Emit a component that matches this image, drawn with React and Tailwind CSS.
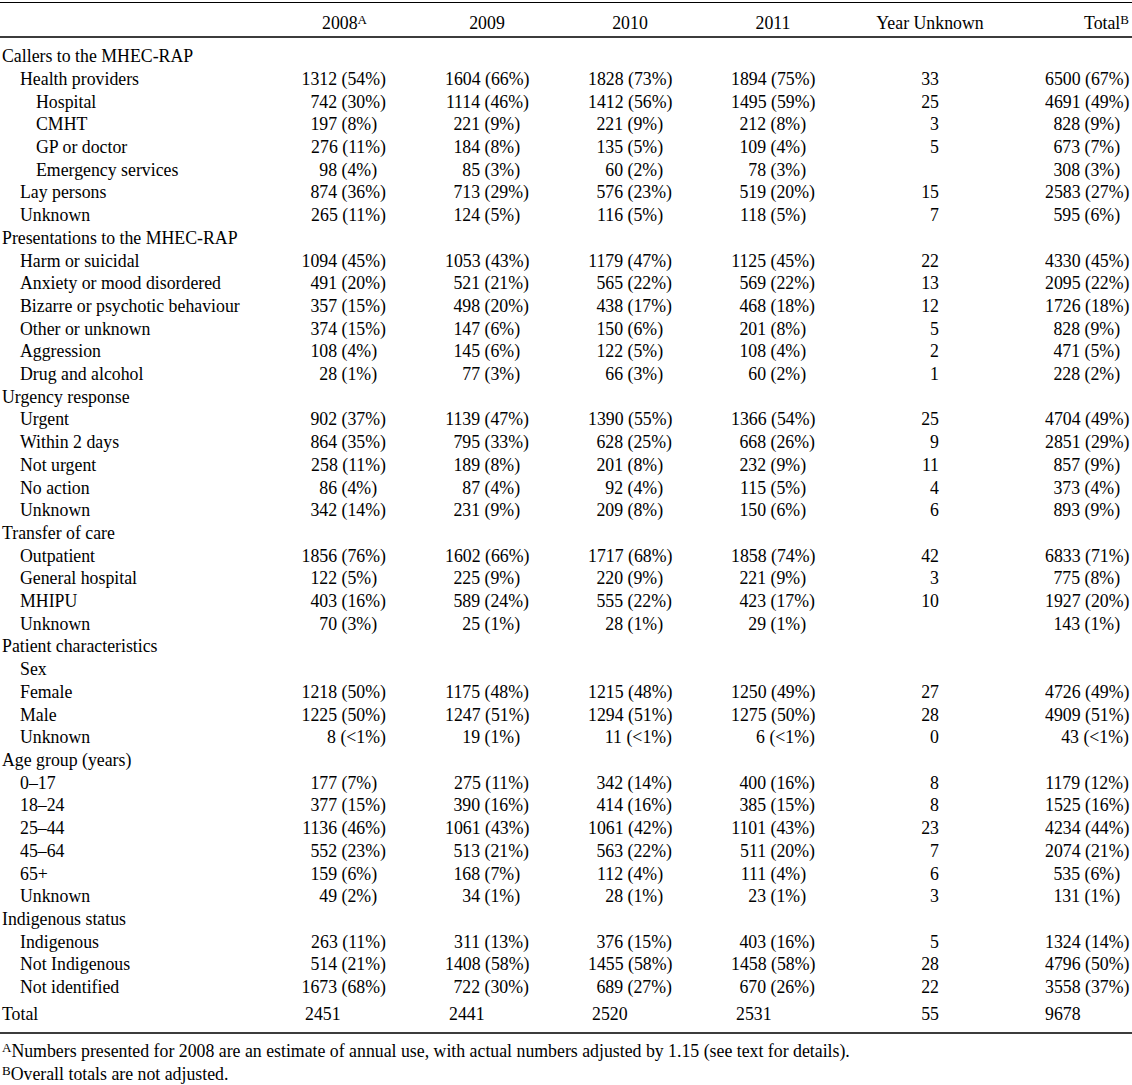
import React from "react";

const rows = [
  { l: "Callers to the MHEC-RAP", i: 0 },
  { l: "Health providers", i: 1, v: ["1312 (54%)", "1604 (66%)", "1828 (73%)", "1894 (75%)", "33", "6500 (67%)"] },
  { l: "Hospital", i: 2, v: ["742 (30%)", "1114 (46%)", "1412 (56%)", "1495 (59%)", "25", "4691 (49%)"] },
  { l: "CMHT", i: 2, v: ["197 (8%)", "221 (9%)", "221 (9%)", "212 (8%)", "3", "828 (9%)"] },
  { l: "GP or doctor", i: 2, v: ["276 (11%)", "184 (8%)", "135 (5%)", "109 (4%)", "5", "673 (7%)"] },
  { l: "Emergency services", i: 2, v: ["98 (4%)", "85 (3%)", "60 (2%)", "78 (3%)", "", "308 (3%)"] },
  { l: "Lay persons", i: 1, v: ["874 (36%)", "713 (29%)", "576 (23%)", "519 (20%)", "15", "2583 (27%)"] },
  { l: "Unknown", i: 1, v: ["265 (11%)", "124 (5%)", "116 (5%)", "118 (5%)", "7", "595 (6%)"] },
  { l: "Presentations to the MHEC-RAP", i: 0 },
  { l: "Harm or suicidal", i: 1, v: ["1094 (45%)", "1053 (43%)", "1179 (47%)", "1125 (45%)", "22", "4330 (45%)"] },
  { l: "Anxiety or mood disordered", i: 1, v: ["491 (20%)", "521 (21%)", "565 (22%)", "569 (22%)", "13", "2095 (22%)"] },
  { l: "Bizarre or psychotic behaviour", i: 1, v: ["357 (15%)", "498 (20%)", "438 (17%)", "468 (18%)", "12", "1726 (18%)"] },
  { l: "Other or unknown", i: 1, v: ["374 (15%)", "147 (6%)", "150 (6%)", "201 (8%)", "5", "828 (9%)"] },
  { l: "Aggression", i: 1, v: ["108 (4%)", "145 (6%)", "122 (5%)", "108 (4%)", "2", "471 (5%)"] },
  { l: "Drug and alcohol", i: 1, v: ["28 (1%)", "77 (3%)", "66 (3%)", "60 (2%)", "1", "228 (2%)"] },
  { l: "Urgency response", i: 0 },
  { l: "Urgent", i: 1, v: ["902 (37%)", "1139 (47%)", "1390 (55%)", "1366 (54%)", "25", "4704 (49%)"] },
  { l: "Within 2 days", i: 1, v: ["864 (35%)", "795 (33%)", "628 (25%)", "668 (26%)", "9", "2851 (29%)"] },
  { l: "Not urgent", i: 1, v: ["258 (11%)", "189 (8%)", "201 (8%)", "232 (9%)", "11", "857 (9%)"] },
  { l: "No action", i: 1, v: ["86 (4%)", "87 (4%)", "92 (4%)", "115 (5%)", "4", "373 (4%)"] },
  { l: "Unknown", i: 1, v: ["342 (14%)", "231 (9%)", "209 (8%)", "150 (6%)", "6", "893 (9%)"] },
  { l: "Transfer of care", i: 0 },
  { l: "Outpatient", i: 1, v: ["1856 (76%)", "1602 (66%)", "1717 (68%)", "1858 (74%)", "42", "6833 (71%)"] },
  { l: "General hospital", i: 1, v: ["122 (5%)", "225 (9%)", "220 (9%)", "221 (9%)", "3", "775 (8%)"] },
  { l: "MHIPU", i: 1, v: ["403 (16%)", "589 (24%)", "555 (22%)", "423 (17%)", "10", "1927 (20%)"] },
  { l: "Unknown", i: 1, v: ["70 (3%)", "25 (1%)", "28 (1%)", "29 (1%)", "", "143 (1%)"] },
  { l: "Patient characteristics", i: 0 },
  { l: "Sex", i: 1 },
  { l: "Female", i: 1, v: ["1218 (50%)", "1175 (48%)", "1215 (48%)", "1250 (49%)", "27", "4726 (49%)"] },
  { l: "Male", i: 1, v: ["1225 (50%)", "1247 (51%)", "1294 (51%)", "1275 (50%)", "28", "4909 (51%)"] },
  { l: "Unknown", i: 1, v: ["8 (<1%)", "19 (1%)", "11 (<1%)", "6 (<1%)", "0", "43 (<1%)"] },
  { l: "Age group (years)", i: 0 },
  { l: "0–17", i: 1, v: ["177 (7%)", "275 (11%)", "342 (14%)", "400 (16%)", "8", "1179 (12%)"] },
  { l: "18–24", i: 1, v: ["377 (15%)", "390 (16%)", "414 (16%)", "385 (15%)", "8", "1525 (16%)"] },
  { l: "25–44", i: 1, v: ["1136 (46%)", "1061 (43%)", "1061 (42%)", "1101 (43%)", "23", "4234 (44%)"] },
  { l: "45–64", i: 1, v: ["552 (23%)", "513 (21%)", "563 (22%)", "511 (20%)", "7", "2074 (21%)"] },
  { l: "65+", i: 1, v: ["159 (6%)", "168 (7%)", "112 (4%)", "111 (4%)", "6", "535 (6%)"] },
  { l: "Unknown", i: 1, v: ["49 (2%)", "34 (1%)", "28 (1%)", "23 (1%)", "3", "131 (1%)"] },
  { l: "Indigenous status", i: 0 },
  { l: "Indigenous", i: 1, v: ["263 (11%)", "311 (13%)", "376 (15%)", "403 (16%)", "5", "1324 (14%)"] },
  { l: "Not Indigenous", i: 1, v: ["514 (21%)", "1408 (58%)", "1455 (58%)", "1458 (58%)", "28", "4796 (50%)"] },
  { l: "Not identified", i: 1, v: ["1673 (68%)", "722 (30%)", "689 (27%)", "670 (26%)", "22", "3558 (37%)"] },
];

const GRID = "grid grid-cols-[242px_85px_84px_84px_84px_112px_84px] gap-x-[59px]";

const indentClass = (i) => (i === 0 ? "pl-[2px]" : i === 1 ? "pl-[20px]" : "pl-[36px]");

const SUP = "text-[13px] relative top-[-5px] align-baseline";

function Cell({ v, yu }) {
  if (yu) return <div className="text-right pr-[47px] whitespace-nowrap">{v}</div>;
  const pad = /\(\d%\)$/.test(v || "");
  return <div className={pad ? "text-right whitespace-nowrap pr-[0.5em]" : "text-right whitespace-nowrap"}>{v}</div>;
}

export default function App() {
  return (
    <div className="w-[1132px] bg-white text-black font-['Liberation_Serif',serif] text-[17.8px] leading-[22.7px] pt-[2px] pb-[10px]">
      <div className="border-t border-black" />
      <div className={`${GRID} pt-[9px] pb-[1.5px]`}>
        <div />
        <div className="text-center whitespace-nowrap pl-[2px]">2008<sup className={SUP}>A</sup></div>
        <div className="text-center">2009</div>
        <div className="text-center">2010</div>
        <div className="text-center">2011</div>
        <div className="text-center whitespace-nowrap">Year Unknown</div>
        <div className="text-right whitespace-nowrap">Total<sup className={SUP}>B</sup></div>
      </div>
      <div className="border-t-2 border-[#3c3c3c]" />
      <div className="pt-[7px]">
        {rows.map((r, k) => (
          <div key={k} className={GRID}>
            <div className={`${indentClass(r.i)} whitespace-nowrap`}>{r.l}</div>
            {r.v ? r.v.map((v, j) => <Cell key={j} v={v} yu={j === 4} />) : null}
          </div>
        ))}
        <div className={`${GRID} pt-[4px] pb-[7px]`}>
          <div className="pl-[2px]">Total</div>
          <div className="pl-[4px]">2451</div>
          <div className="pl-[4px]">2441</div>
          <div className="pl-[4px]">2520</div>
          <div className="pl-[5px]">2531</div>
          <div className="text-right pr-[47px]">55</div>
          <div>9678</div>
        </div>
      </div>
      <div className="border-t-2 border-[#3c3c3c]" />
      <div className="pt-[6px] pl-[2px] flex flex-col">
        <div className="whitespace-nowrap"><sup className={SUP}>A</sup>Numbers presented for 2008 are an estimate of annual use, with actual numbers adjusted by 1.15 (see text for details).</div>
        <div className="whitespace-nowrap"><sup className={SUP}>B</sup>Overall totals are not adjusted.</div>
      </div>
    </div>
  );
}
